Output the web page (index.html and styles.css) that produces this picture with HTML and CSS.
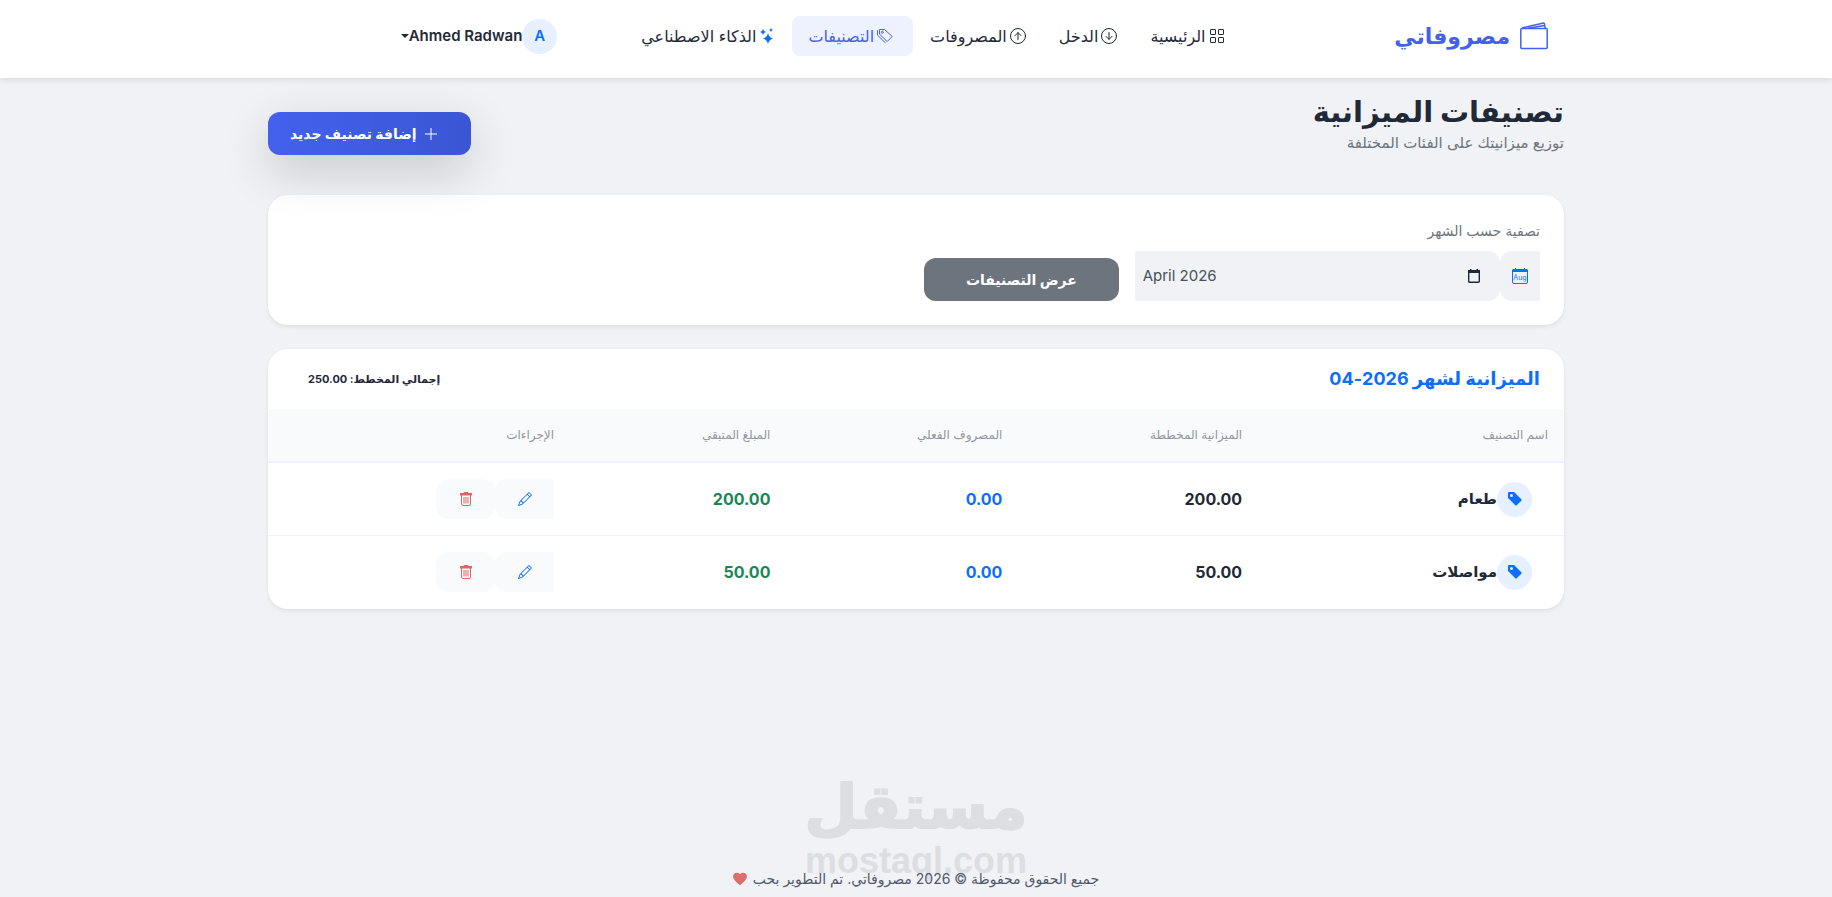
FILE: index.html
```html
<!DOCTYPE html>
<html lang="ar" dir="rtl">
<head>
    <meta charset="UTF-8">
    <meta name="viewport" content="width=device-width, initial-scale=1.0">
    <title>مصروفاتي</title>
    <link rel="stylesheet" href="styles.css">
</head>
<body>
    <!-- icons used more than once -->
    <svg class="sprite" aria-hidden="true">
        <symbol id="i-tag" viewBox="1 1 14 14"><path d="M2 1a1 1 0 0 0-1 1v4.586a1 1 0 0 0 .293.707l7 7a1 1 0 0 0 1.414 0l4.586-4.586a1 1 0 0 0 0-1.414l-7-7A1 1 0 0 0 6.586 1zm4 3.500a1.500 1.500 0 1 1-3 0 1.500 1.500 0 0 1 3 0"/></symbol>
        <symbol id="i-pencil" viewBox="0 0 16 16"><path d="M12.146.146a.5.5 0 0 1 .708 0l3 3a.5.5 0 0 1 0 .708l-10 10a.5.5 0 0 1-.168.11l-5 2a.5.5 0 0 1-.65-.65l2-5a.5.5 0 0 1 .11-.168zM11.207 2.500 13.500 4.793 14.793 3.500 12.500 1.207zm1.586 3L10.500 3.207 4 9.707V10h.5a.5.5 0 0 1 .5.5v.5h.5a.5.5 0 0 1 .5.5v.5h.293zm-9.761 5.175-.106.106-1.528 3.821 3.821-1.528.106-.106A.5.5 0 0 1 5 12.500V12h-.5a.5.5 0 0 1-.5-.5V11h-.5a.5.5 0 0 1-.468-.325"/></symbol>
        <symbol id="i-trash" viewBox="0 0 14 14"><path d="M5 0h4l.5 1H13v2.500H1V1h3.500z"/><path d="M2.500 3v9q0 1.500 1.500 1.500h6q1.500 0 1.500-1.500V3M5 5v6.500M7 5v6.500M9 5v6.500" fill="none" stroke="currentColor"/></symbol>
    </svg>

    <header class="navbar">
        <div class="container navbar-inner">
            <a class="brand" href="#">
                <svg class="brand-icon" viewBox="0 0 28 28" fill="none" stroke="currentColor" stroke-width="1.500" stroke-linejoin="round" aria-hidden="true"><rect x=".8" y="6.500" width="26.400" height="20" rx="1"/><path d="M2 6 22.500 1.200q1.700-.4 2 1l.7 4M8 6.200 24.500 3.600"/></svg>
                <span>مصروفاتي</span>
            </a>
            <nav class="nav">
                <a class="nav-link" href="#">
                    <svg class="icon" viewBox="0 0 16 16" fill="none" stroke="currentColor" aria-hidden="true"><rect x="1.500" y="1.500" width="5" height="5" rx=".5"/><rect x="9.500" y="1.500" width="5" height="5" rx=".5"/><rect x="1.500" y="9.500" width="5" height="5" rx=".5"/><rect x="9.500" y="9.500" width="5" height="5" rx=".5"/></svg>
                    <span>الرئيسية</span>
                </a>
                <a class="nav-link" href="#">
                    <svg class="icon" viewBox="0 0 16 16" fill="none" stroke="currentColor" stroke-linecap="round" stroke-linejoin="round" aria-hidden="true"><circle cx="8" cy="8" r="7.500"/><path d="M8 4.500v6.700M5 8.400l3 3 3-3"/></svg>
                    <span>الدخل</span>
                </a>
                <a class="nav-link" href="#">
                    <svg class="icon" viewBox="0 0 16 16" fill="none" stroke="currentColor" stroke-linecap="round" stroke-linejoin="round" aria-hidden="true"><circle cx="8" cy="8" r="7.500"/><path d="M8 11.500V4.800M5 7.600l3-3 3 3"/></svg>
                    <span>المصروفات</span>
                </a>
                <a class="nav-link active" href="#">
                    <svg class="icon" viewBox="0 0 16 16" fill="none" stroke="currentColor" stroke-linejoin="round" aria-hidden="true"><path d="M2.500 1.500h5.100l7.600 7-5 5-7.700-7.400z"/><circle cx="5.300" cy="4.300" r="1"/><path d="M.5 2.200v5l8 7.800"/></svg>
                    <span>التصنيفات</span>
                </a>
                <a class="nav-link" href="#">
                    <svg class="icon icon-blue" viewBox="0 0 16 16" fill="currentColor" aria-hidden="true"><path d="M9 5q1 4.500 5 5.500-4 1-5 5.500-1-4.500-5-5.500 4-1 5-5.500M4 1q.6 2.400 3 3-2.400.6-3 3-.6-2.400-3-3 2.400-.6 3-3M12 0q.3 1.700 2 2-1.700.3-2 2-.3-1.700-2-2 1.700-.3 2-2"/></svg>
                    <span>الذكاء الاصطناعي</span>
                </a>
            </nav>
            <button class="user" type="button">
                <span class="circle">A</span>
                <span>Ahmed Radwan</span>
                <span class="caret"></span>
            </button>
        </div>
    </header>

    <main class="container main">
        <div class="page-head">
            <div>
                <h1>تصنيفات الميزانية</h1>
                <p>توزيع ميزانيتك على الفئات المختلفة</p>
            </div>
            <button class="btn btn-primary" type="button">
                <svg class="icon" viewBox="0 0 16 16" stroke="currentColor" aria-hidden="true"><path d="M8 2v12M2 8h12"/></svg>
                <span>إضافة تصنيف جديد</span>
            </button>
        </div>

        <form class="card filter">
            <div class="field">
                <label for="month">تصفية حسب الشهر</label>
                <div class="input-group">
                    <span class="addon">
                        <svg class="icon" viewBox="0 0 16 16" aria-hidden="true"><rect x=".5" y="1.500" width="15" height="14" rx="1.500" fill="none" stroke="currentColor"/><path d="M0 4V2.500Q0 1 2 1h1V0h1v1h8V0h1v1h1q2 0 2 1.500V4z" fill="currentColor"/><text x="8" y="12" text-anchor="middle">Aug</text></svg>
                    </span>
                    <div class="month-box">
                        <button type="button" aria-label="اختيار الشهر">
                            <svg class="icon" viewBox="0 0 16 16" aria-hidden="true"><path d="M2 2h2V1h1.500v1h5V1H12v1h2v3H2z" fill="currentColor"/><rect x="2.700" y="3" width="10.600" height="11.300" rx="1" fill="none" stroke="currentColor" stroke-width="1.400"/></svg>
                        </button>
                        <input id="month" type="text" value="April 2026" dir="ltr">
                    </div>
                </div>
            </div>
            <button class="btn btn-secondary" type="submit">عرض التصنيفات</button>
        </form>

        <section class="card">
            <div class="card-head">
                <h2>الميزانية لشهر 2026-04</h2>
                <span class="total">إجمالي المخطط: 250.00</span>
            </div>
            <table>
                <colgroup>
                    <col class="col-name">
                    <col class="col-planned">
                    <col class="col-spent">
                    <col class="col-left">
                    <col>
                </colgroup>
                <thead>
                    <tr>
                        <th>اسم التصنيف</th>
                        <th>الميزانية المخططة</th>
                        <th>المصروف الفعلي</th>
                        <th>المبلغ المتبقي</th>
                        <th>الإجراءات</th>
                    </tr>
                </thead>
                <tbody>
                    <tr>
                        <td>
                            <div class="category">
                                <span class="circle"><svg class="icon-sm" fill="currentColor" aria-hidden="true"><use href="#i-tag"/></svg></span>
                                <span>طعام</span>
                            </div>
                        </td>
                        <td>200.00</td>
                        <td class="text-blue">0.00</td>
                        <td class="text-green">200.00</td>
                        <td>
                            <div class="actions">
                                <button class="edit" type="button" aria-label="تعديل"><svg class="icon-sm" fill="currentColor" aria-hidden="true"><use href="#i-pencil"/></svg></button>
                                <button class="delete" type="button" aria-label="حذف"><svg class="icon-sm" fill="currentColor" aria-hidden="true"><use href="#i-trash"/></svg></button>
                            </div>
                        </td>
                    </tr>
                    <tr>
                        <td>
                            <div class="category">
                                <span class="circle"><svg class="icon-sm" fill="currentColor" aria-hidden="true"><use href="#i-tag"/></svg></span>
                                <span>مواصلات</span>
                            </div>
                        </td>
                        <td>50.00</td>
                        <td class="text-blue">0.00</td>
                        <td class="text-green">50.00</td>
                        <td>
                            <div class="actions">
                                <button class="edit" type="button" aria-label="تعديل"><svg class="icon-sm" fill="currentColor" aria-hidden="true"><use href="#i-pencil"/></svg></button>
                                <button class="delete" type="button" aria-label="حذف"><svg class="icon-sm" fill="currentColor" aria-hidden="true"><use href="#i-trash"/></svg></button>
                            </div>
                        </td>
                    </tr>
                </tbody>
            </table>
        </section>
    </main>

    <footer class="footer">
        <div class="watermark">
            <span class="watermark-ar">مستقل</span>
            <span class="watermark-en">mostaql.com</span>
        </div>
        <p>
            <span>جميع الحقوق محفوظة © 2026 مصروفاتي. تم التطوير بحب</span>
            <svg class="icon-sm heart" viewBox="0 0 16 16" fill="currentColor" aria-hidden="true"><path d="M8 15C-7 5 3-2.500 8 2.500 13-2.500 23 5 8 15"/></svg>
        </p>
    </footer>
</body>
</html>
```
FILE: styles.css
```css
:root {
    --primary: #4361ee;
    --blue: #0d6efd;
    --blue-soft: #e7f0ff;
    --dark: #1f2937;
    --muted: #6c757d;
    --bg: #f0f2f6;
    --radius: 12px;
}

* {
    box-sizing: border-box;
}

body {
    display: flex;
    flex-direction: column;
    min-height: 100vh;
    margin: 0;
    background: var(--bg);
    color: var(--dark);
    font-family: Inter, "DejaVu Sans", sans-serif;
    font-size: 16px;
    line-height: 24px;
}

h1, h2, p {
    margin: 0;
}

a {
    color: inherit;
    text-decoration: none;
}

button, input {
    border: none;
    color: inherit;
    font: inherit;
}

button {
    padding: 0;
    background: none;
    cursor: pointer;
}

.sprite {
    position: absolute;
    width: 0;
    height: 0;
}

.icon {
    width: 16px;
    height: 16px;
    flex: none;
}

.icon-sm {
    width: 14px;
    height: 14px;
    flex: none;
}

.icon-blue {
    color: var(--blue);
}

.container {
    width: 100%;
    max-width: 1320px;
    margin: 0 auto;
    padding: 0 12px;
}

/* Top bar */
.navbar {
    background: #fff;
    box-shadow: 0 2px 6px rgba(0, 0, 0, 0.1);
}

.navbar-inner {
    display: grid;
    grid-template-columns: 9fr 20fr 8fr;
    align-items: center;
    min-height: 78px;
    padding: 0 28px;
    padding-bottom: 6px;
}

.brand {
    display: flex;
    align-items: center;
    gap: 10px;
    color: var(--primary);
    font-size: 22px;
    font-weight: 700;
}

.brand-icon {
    width: 28px;
    height: 28px;
}

.nav {
    display: flex;
    gap: 1px;
}

.nav-link {
    display: flex;
    align-items: center;
    gap: 3px;
    padding: 8px 16px;
    border-radius: 8px;
    white-space: nowrap;
}

.nav-link.active {
    padding-right: 20px;
    background: #eef2ff;
    color: var(--primary);
}

.user {
    display: flex;
    align-items: center;
    font-size: 15px;
    font-weight: 600;
}

.circle {
    display: flex;
    align-items: center;
    justify-content: center;
    width: 35px;
    height: 35px;
    border-radius: 50%;
    background: var(--blue-soft);
    color: var(--blue);
}

.caret {
    border: 4px solid transparent;
    border-top-color: currentColor;
    border-bottom: 0;
}

/* Page title */
.main {
    flex: 1;
}

.page-head {
    display: flex;
    justify-content: space-between;
    align-items: flex-end;
    padding: 15px 0 40px;
}

h1 {
    font-size: 29px;
    font-weight: 700;
    line-height: 38px;
}

.page-head p {
    color: var(--muted);
    font-size: 15px;
}

.btn {
    display: flex;
    align-items: center;
    justify-content: center;
    gap: 6px;
    height: 43px;
    padding: 0 24px;
    border-radius: var(--radius);
    color: #fff;
    font-size: 14px;
    font-weight: 700;
    white-space: nowrap;
}

.btn-primary {
    padding: 0 32px 0 22px;
    background: linear-gradient(90deg, #4361ee, #3a56d4);
    box-shadow: 0 16px 48px rgba(0, 0, 0, 0.18);
}

.btn-secondary {
    background: var(--muted);
}

/* Cards */
.card {
    margin-bottom: 24px;
    border-radius: 20px;
    background: #fff;
    box-shadow: 0 2px 4px rgba(0, 0, 0, 0.08);
    overflow: hidden;
}

.filter {
    display: grid;
    grid-template-columns: repeat(12, 1fr);
    align-items: end;
    gap: 16px;
    padding: 24px;
}

.field {
    grid-column: span 4;
}

.field label {
    display: block;
    margin-bottom: 8px;
    color: var(--muted);
    font-size: 14px;
}

.filter .btn {
    grid-column: span 2;
}

.input-group {
    display: flex;
    height: 50px;
}

.addon {
    display: flex;
    align-items: center;
    padding: 0 12px;
    border-radius: var(--radius) 0 0 var(--radius);
    background: var(--bg);
    color: var(--blue);
}

.addon text {
    fill: currentColor;
    font-size: 7px;
}

.month-box {
    display: flex;
    flex: 1;
    align-items: center;
    padding: 0 18px 0 8px;
    border-radius: 0 var(--radius) var(--radius) 0;
    background: var(--bg);
}

.month-box button {
    display: flex;
}

.month-box input {
    flex: 1;
    min-width: 0;
    padding: 0;
    background: none;
    color: #495057;
    font-size: 15px;
}

.card-head {
    display: flex;
    justify-content: space-between;
    align-items: center;
    min-height: 60px;
    padding: 0 24px;
}

h2 {
    color: var(--blue);
    font-size: 18px;
    font-weight: 700;
}

.total {
    padding: 0 16px;
    font-size: 11px;
    font-weight: 700;
}

/* Budget table */
table {
    width: 100%;
    border-collapse: collapse;
    table-layout: fixed;
}

.col-name {
    width: 23.6%;
}

.col-planned {
    width: 18.5%;
}

.col-spent {
    width: 17.9%;
}

.col-left {
    width: 16.7%;
}

th, td {
    padding: 16px;
    text-align: right;
}

th {
    height: 53px;
    padding: 0 16px;
    border-bottom: 2px solid #eef2ff;
    background: #f8fafc;
    color: #9096a0;
    font-size: 12px;
    font-weight: 400;
}

td {
    height: 73px;
    font-weight: 700;
}

tbody tr + tr td {
    border-top: 1px solid var(--bg);
}

.text-blue {
    color: var(--blue);
}

.text-green {
    color: #198754;
}

.category {
    display: flex;
    align-items: center;
    padding: 0 16px;
    font-size: 15px;
}

.actions {
    display: flex;
}

.actions button {
    display: flex;
    align-items: center;
    justify-content: center;
    width: 59px;
    height: 40px;
    border-radius: var(--radius);
    background: #f8fafc;
}

.actions .edit {
    border-radius: var(--radius) 0 0 var(--radius);
    color: var(--blue);
}

.actions .delete {
    color: #dc6864;
}

/* Footer */
.footer {
    position: relative;
    padding: 6px 0;
    color: #50586a;
    font-size: 14px;
}

.footer p {
    position: relative;
    display: flex;
    align-items: center;
    justify-content: center;
    gap: 6px;
}

.heart {
    color: #dc6f6d;
}

.watermark {
    position: absolute;
    right: 0;
    bottom: 18px;
    left: 0;
    display: flex;
    flex-direction: column;
    align-items: center;
    color: #dddee1;
    font-weight: 700;
    pointer-events: none;
}

.watermark-ar {
    font-family: "DejaVu Sans", sans-serif;
    font-size: 61px;
    line-height: 72px;
    -webkit-text-stroke: 2px #dddee1;
}

.watermark-en {
    font-family: "Liberation Sans", Arial, sans-serif;
    font-size: 36px;
    line-height: 36px;
}

@media (max-width: 992px) {
    .navbar-inner {
        display: flex;
        flex-wrap: wrap;
        justify-content: space-between;
    }

    .nav {
        flex-wrap: wrap;
    }

    .field,
    .filter .btn {
        grid-column: span 12;
    }
}
```
